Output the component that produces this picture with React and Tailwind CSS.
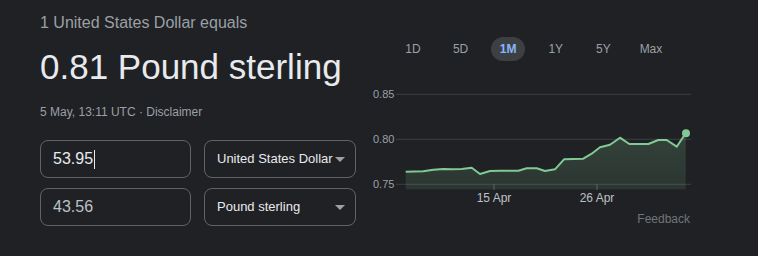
import { useState } from 'react';

const ranges = ['1D', '5D', '1M', '1Y', '5Y', 'Max'];

// chart points, relative to the svg box
const pts = [
    [45.7, 86.7], [63.3, 86.3], [73.3, 84.7], [83.3, 84], [91.7, 84.3], [101.7, 84], [111.7, 82.7],
    [120, 89], [130, 86], [140, 85.7], [158.3, 85.7], [166.7, 83.3], [176.7, 83.3], [185, 86],
    [195, 84.3], [204, 74.3], [213.3, 74], [223.3, 73.7], [231.7, 68.7], [240, 62.3], [250, 59.7],
    [260, 52.7], [269.3, 59], [278.3, 59], [288.3, 59], [298.3, 55], [306.7, 55], [316.7, 61.7],
    [325.7, 48.3],
];

function Chart() {
    const line = pts.map(p => p.join(',')).join(' ');
    const area = `${line} 325.7,104.3 45.7,104.3`;
    return (
        <svg width="340" height="125" viewBox="0 0 340 125" className="block">
            <defs>
                <linearGradient id="fillg" x1="0" y1="0" x2="0" y2="1">
                    <stop offset="0%" stopColor="#81c995" stopOpacity="0.2" />
                    <stop offset="100%" stopColor="#81c995" stopOpacity="0.12" />
                </linearGradient>
            </defs>
            {[9.3, 54.3, 99.3].map(y => (
                <line key={y} x1="36" x2="331" y1={y} y2={y} stroke="#3c4043" strokeWidth="1" />
            ))}
            <g fill="#9aa0a6" fontSize="11" fontFamily="'Liberation Sans', Arial, sans-serif">
                <text x="13" y="13.3">0.85</text>
                <text x="13" y="58.3">0.80</text>
                <text x="13" y="103.3">0.75</text>
            </g>
            <polygon points={area} fill="url(#fillg)" />
            <polyline points={line} fill="none" stroke="#81c995" strokeWidth="2" strokeLinejoin="round" />
            <circle cx="326" cy="48.3" r="4" fill="#81c995" />
            <line x1="134" x2="134" y1="99" y2="105" stroke="#5f6368" />
            <line x1="237" x2="237" y1="99" y2="105" stroke="#5f6368" />
            <g fill="#bdc1c6" fontSize="12" fontFamily="'Liberation Sans', Arial, sans-serif" textAnchor="middle">
                <text x="134" y="116.5">15 Apr</text>
                <text x="237" y="116.5">26 Apr</text>
            </g>
        </svg>
    );
}

export default function App() {
    const [range, setRange] = useState('1M');
    return (
        <div className="w-[758px] h-[256px] bg-[#202124] flex font-['Liberation_Sans',Arial,sans-serif] overflow-hidden">
            <div className="w-[360px] pl-10 pt-[12px]">
                <div className="text-[16px] leading-[22px] text-[#9aa0a6]">1 United States Dollar equals</div>
                <div className="text-[35px] leading-[44px] text-[#e8eaed] mt-[11px]">0.81 Pound sterling</div>
                <div className="text-[12px] leading-[16px] text-[#9aa0a6] mt-[15px]">
                    5 May, 13:11 UTC · Disclaimer
                </div>
                <div className="mt-[20px] flex flex-col gap-[10px]">
                    <div className="flex gap-[13px]">
                        <div className="w-[151px] h-[38px] border border-[#5f6368] rounded-lg flex items-center px-3 text-[16px] text-[#e8eaed]">
                            53.95<span className="w-px h-[19px] bg-[#e8eaed] ml-px" />
                        </div>
                        <div className="w-[152px] h-[38px] border border-[#5f6368] rounded-lg flex items-center justify-between pl-3 pr-[10px] text-[13px] text-[#e8eaed] whitespace-nowrap">
                            <span>United States Dollar</span>
                            <span className="border-x-[5px] border-x-transparent border-t-[5px] border-t-[#9aa0a6]" />
                        </div>
                    </div>
                    <div className="flex gap-[13px]">
                        <div className="w-[151px] h-[38px] border border-[#5f6368] rounded-lg flex items-center px-3 text-[16px] text-[#bdc1c6]">
                            43.56
                        </div>
                        <div className="w-[152px] h-[38px] border border-[#5f6368] rounded-lg flex items-center justify-between pl-3 pr-[10px] text-[13px] text-[#e8eaed] whitespace-nowrap">
                            <span>Pound sterling</span>
                            <span className="border-x-[5px] border-x-transparent border-t-[5px] border-t-[#9aa0a6]" />
                        </div>
                    </div>
                </div>
            </div>
            <div className="w-[340px] pt-[37px]">
                <div className="flex gap-[13.6px] pl-[36px]">
                    {ranges.map(r => (
                        <button
                            key={r}
                            onClick={() => setRange(r)}
                            className={
                                r === range
                                    ? 'w-[34px] h-6 rounded-full bg-[#3c4043] text-[12px] font-bold text-[#8ab4f8]'
                                    : 'w-[34px] h-6 rounded-full text-[12px] text-[#9aa0a6]'
                            }
                        >
                            {r}
                        </button>
                    ))}
                </div>
                <div className="mt-[24px]">
                    <Chart />
                </div>
                <div className="text-right pr-[10px] text-[12px] leading-[14px] text-[#70757a] mt-[2px]">Feedback</div>
            </div>
        </div>
    );
}
